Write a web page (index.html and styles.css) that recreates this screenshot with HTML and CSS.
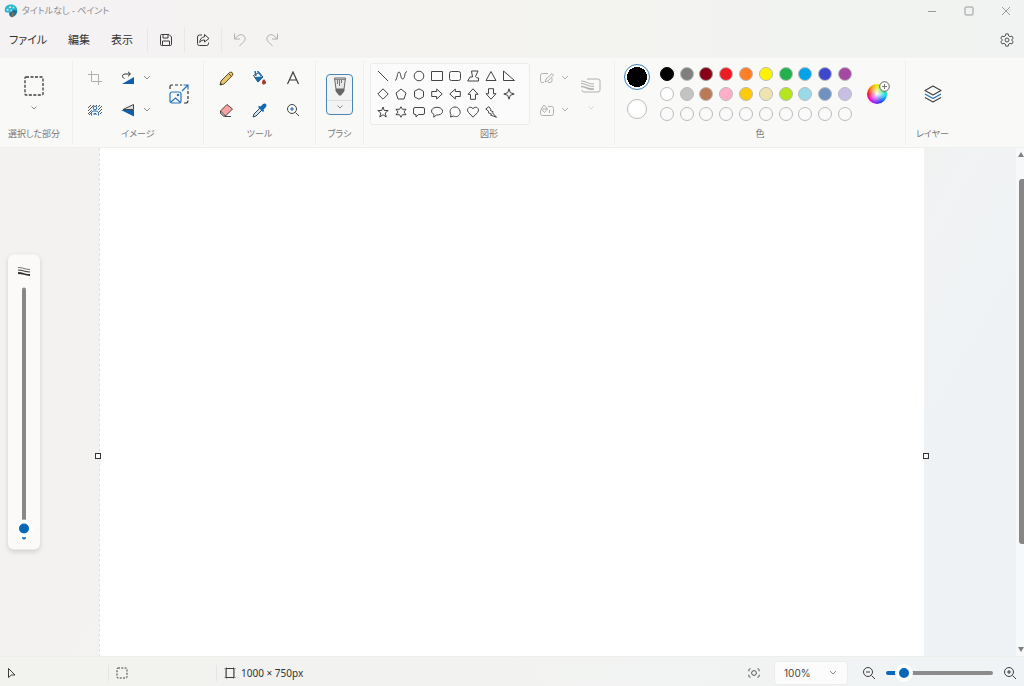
FILE: index.html
```html
<!DOCTYPE html>
<html lang="ja">
<head>
<meta charset="utf-8">
<meta name="viewport" content="width=device-width, initial-scale=1">
<title>タイトルなし - ペイント</title>
<link rel="stylesheet" href="styles.css">
</head>
<body>
<header class="titlebar">
  <svg class="logo" width="14" height="14" viewBox="0 0 14 14" aria-hidden="true">
    <path d="M7 .6C3 .6 .7 3 .7 6.3c0 2 1.5 2.5 3 2.2 1-.2 1.4 .5 1.4 1.3 0 1.5 .8 3 2.6 3 3.400 0 5.600-3 5.600-6.300C13.300 3 10.600 .6 7 .6z" fill="#2fb4cf"/>
    <path d="M9 6l4 .5c0 3-2 6-5.300 6.400C6 12.900 5.300 11 5.300 9.500z" fill="#1d6f96"/>
    <path d="M8 8l2.500 1-1.500 4-2 .3z" fill="#8c6a58"/>
    <circle cx="3.6" cy="5.7" r="1" fill="#d8f6fa"/><circle cx="6" cy="3.3" r="1" fill="#e9fbd8"/><circle cx="9.3" cy="3.6" r="1" fill="#8ae4ee"/><circle cx="7.2" cy="6.4" r="1" fill="#8fe3f0"/>
  </svg>
  <h1 class="title">タイトルなし - ペイント</h1>
  <div class="window-buttons">
    <button aria-label="最小化"><svg width="10" height="10" viewBox="0 0 10 10"><path d="M1 5.5h8"/></svg></button>
    <button aria-label="最大化"><svg width="10" height="10" viewBox="0 0 10 10"><rect x="1" y="1" width="8" height="8" rx="1"/></svg></button>
    <button aria-label="閉じる"><svg width="10" height="10" viewBox="0 0 10 10"><path d="M1 1l8 8M9 1l-8 8"/></svg></button>
  </div>
</header>

<nav class="menubar" aria-label="メニュー">
  <div class="menus">
    <button>ファイル</button>
    <button>編集</button>
    <button>表示</button>
  </div>
  <div class="quick"><button aria-label="保存"><svg class="ic" width="14" height="14" viewBox="0 0 14 14"><path d="M2.500 1.500h7.500l2.500 2.500v7.500a1 1 0 0 1-1 1h-9a1 1 0 0 1-1-1v-9a1 1 0 0 1 1-1zM4 1.500V5h5V1.500M3.500 12.500V8h7v4.500"/></svg></button></div>
  <div class="quick"><button aria-label="共有"><svg class="ic" width="14" height="14" viewBox="0 0 14 14"><path d="M6 2H3.500A2 2 0 0 0 1.500 4v6.500a2 2 0 0 0 2 2h7a2 2 0 0 0 2-2V9.500M8.500 1.500L13 5.500 8.500 9V7C6.500 7 5 7.500 3.700 9.500 4 6 5.500 4.200 8.500 3.800z"/></svg></button></div>
  <div class="quick history">
    <button aria-label="元に戻す" disabled><svg class="ic" width="14" height="14" viewBox="0 0 14 14"><path d="M1.500 .5v5.500h5.500M1.800 5.700L5 2.800c2-1.800 4.500-1.300 6 .2 1.500 1.600 1.500 4 0 5.500L6.500 13"/></svg></button>
    <button aria-label="やり直し" disabled><svg class="ic" width="14" height="14" viewBox="0 0 14 14"><path d="M12.500 .5v5.500h-5.500M12.200 5.700L9 2.800C7 1 4.500 1.500 3 3c-1.500 1.600-1.500 4 0 5.500L7.500 13"/></svg></button>
  </div>
  <button class="settings" aria-label="設定"><svg class="ic" width="14" height="14" viewBox="0 0 16 16"><path d="M6.600 1h2.800l.5 2.300 1.500 .9 2.200-.7 1.400 2.400L13.300 8l1.700 2.100-1.400 2.400-2.200-.7-1.500 .9-.5 2.300H6.600l-.5-2.300-1.500-.9-2.200 .7L1 10.100 2.700 8 1 5.900l1.400-2.400 2.200 .7 1.500-.9z"/><circle cx="8" cy="8" r="2.2"/></svg></button>
</nav>

<main class="ribbon">
  <section class="group g-select">
    <div class="body stack">
      <button class="big" aria-label="選択"><svg class="ic" width="20" height="20" viewBox="0 0 20 20"><rect x="1" y="1" width="18" height="18" rx="1" stroke-width="1.3" stroke-dasharray="3 1.5"/></svg></button>
      <button aria-label="選択オプション"><svg class="chev" width="6" height="4" viewBox="0 0 6 4"><path d="M.5 .5L3 3 5.500 .5"/></svg></button>
    </div>
    <h2>選択した部分</h2>
  </section>

  <section class="group g-image">
    <div class="body">
      <div class="image-tools">
        <button aria-label="トリミング" disabled><svg class="ic" width="14" height="14" viewBox="0 0 14 14"><path d="M3.500 0v10.500H14M0 3.500h10.500V14"/></svg></button>
        <button aria-label="回転"><svg width="14" height="14" viewBox="0 0 14 14"><path d="M13 6v7H1z" fill="#0f5fad"/><path d="M3.500 7.500C.5 6.500 1 3 4 3h5M7 .8L9.500 3 7 5.300" fill="none" stroke="#333"/></svg></button>
        <button aria-label="回転オプション"><svg class="chev" width="8" height="6" viewBox="0 0 8 6"><path d="M1 1l3 3 3-3"/></svg></button>
        <button aria-label="背景の削除"><svg width="14" height="12" viewBox="0 0 14 12" fill="none" stroke="#555"><path d="M0 4L3 1M0 7l6-6M0 10l4-4M1 11l3-3M8 2l1-1M10 3l2-2M10 6l4-4M10 9l4-4M12 10l2-2"/><path d="M3.500 11.500V9.500c0-2 1-2.500 3.500-2.500s3.500 .5 3.500 2.500v2M6 11V9.500h2V11" stroke="#1d69b0"/><circle cx="7" cy="4" r="1.8" stroke="#1d69b0"/></svg></button>
        <button aria-label="反転"><svg width="14" height="14" viewBox="0 0 14 14"><path d="M2 6.500l10.500-5v5z" fill="#ddd" stroke="#444"/><path d="M0 7h13v6.500z" fill="#0f5fad"/></svg></button>
        <button aria-label="反転オプション"><svg class="chev" width="8" height="6" viewBox="0 0 8 6"><path d="M1 1l3 3 3-3"/></svg></button>
      </div>
      <button class="resize" aria-label="サイズ変更"><svg width="20" height="20" viewBox="0 0 20 20" fill="none"><path d="M1 5V2.500Q1 1 2.500 1H4M6 1h3M11 1h2M19 7v3M19 12v3M19 16.500Q19 19 17 19h-2" stroke="#333" stroke-width="1.2"/><g stroke="#2874b5" stroke-width="1.2"><rect x="1" y="8" width="11" height="11" rx="2"/><path d="M2 18l4.500-4 4.500 4M13 7l6-6M14.500 1H19v4.500"/><circle cx="9" cy="11" r=".7"/></g></svg></button>
    </div>
    <h2>イメージ</h2>
  </section>

  <section class="group g-tools">
    <div class="body">
      <div class="tools">
        <button aria-label="鉛筆"><svg width="15" height="15" viewBox="0 0 15 15"><path d="M1 14l1-4 8.500-8.500q1.500-1 2.700 .2t.2 2.700L5 13z" fill="#e9c56c" stroke="#5a4a2c"/><path d="M1 14l.7-2.200 1.500 1.500z" fill="#333"/><path d="M10 3l2.500 2.500" stroke="#5a4a2c"/></svg></button>
        <button aria-label="塗りつぶし"><svg width="15" height="15" viewBox="0 0 15 15"><path d="M1.500 4.500L7 1.500l4 4.500-5 5z" fill="#fff" stroke="#444"/><path d="M2.500 6L10 5.500l1 1-5 5z" fill="#1b6cad"/><path d="M3 0l1 5M5.500 0l4 5" stroke="#1b6cad" stroke-width="1.5"/><path d="M12 8q2.500 3 2 4t-2 1.500-2-1.500 2-4z" fill="#a8392b"/></svg></button>
        <button aria-label="テキスト"><svg class="ic" width="14" height="14" viewBox="0 0 14 14"><path d="M1.500 13L7 1l5.500 12M3.500 9h7" stroke-width="1.2"/></svg></button>
        <button aria-label="消しゴム"><svg width="15" height="15" viewBox="0 0 15 15"><path d="M1.500 8L8 1.500l5.500 4.500L6.500 13H4.500L1.500 10z" fill="#f5a3a4" stroke="#54413f"/><path d="M1.500 8l5 5H4.500l-3-3z" fill="#fff" stroke="#444"/><path d="M6 13.500h6" stroke="#444"/></svg></button>
        <button aria-label="色の選択"><svg width="15" height="15" viewBox="0 0 15 15"><path d="M1 14l1-3 6-6 2 2-6 6z" fill="#c9e5f5" stroke="#345"/><path d="M7 3l1.500 .5L11 1q2-1 3 0t0 3l-2.500 2.500 .5 1.500-1 1-5-5z" fill="#1269b5"/></svg></button>
        <button aria-label="拡大鏡"><svg width="14" height="14" viewBox="0 0 14 14" fill="none"><circle cx="6" cy="6" r="4.5" stroke="#444"/><path d="M9.500 9.500L13 13" stroke="#444"/><path d="M4 6h4M6 4v4" stroke="#176bb4"/></svg></button>
      </div>
    </div>
    <h2>ツール</h2>
  </section>

  <section class="group g-brush">
    <div class="body">
      <div class="brush">
        <button aria-label="ブラシ"><svg width="14" height="20" viewBox="0 0 14 20"><path d="M1.500 1h11l-1.500 11H3z" fill="#e6e6e6" stroke="#666"/><path d="M2 2.500h10" stroke="#888"/><path d="M4.500 3v4M6.500 3v6M8.500 3v3" stroke="#777"/><path d="M2.500 12h9v2L8 18.500H6L2.500 14z" fill="#666"/></svg></button>
        <button aria-label="ブラシの種類"><svg class="chev" width="6" height="4" viewBox="0 0 6 4"><path d="M.5 .5L3 3 5.500 .5"/></svg></button>
      </div>
    </div>
    <h2>ブラシ</h2>
  </section>

  <section class="group g-shapes">
    <div class="body">
      <div class="shapes">
        <button aria-label="直線"><svg viewBox="0 0 12 12"><path d="M1 1l10 10"/></svg></button>
        <button aria-label="曲線"><svg viewBox="0 0 12 12"><path d="M0 10.500C2.500 10 2 2 4 2s1.500 8 4 7S9 2 12 1.500"/></svg></button>
        <button aria-label="楕円形"><svg viewBox="0 0 12 12"><circle cx="6" cy="6" r="4.8"/></svg></button>
        <button aria-label="四角形"><svg viewBox="0 0 12 12"><path d="M.5 1.500h11v9H.5z"/></svg></button>
        <button aria-label="角丸四角形"><svg viewBox="0 0 12 12"><rect x=".5" y="1.5" width="11" height="9" rx="2"/></svg></button>
        <button aria-label="多角形"><svg viewBox="0 0 12 12"><path d="M4.500 1H11L8.500 6.500Q9 8 11.500 8v3H.7L3 7h2.500z"/></svg></button>
        <button aria-label="三角形"><svg viewBox="0 0 12 12"><path d="M6 1.500l5 9H1z"/></svg></button>
        <button aria-label="直角三角形"><svg viewBox="0 0 12 12"><path d="M.5 1v9.500h11z"/></svg></button>
        <button aria-label="ひし形"><svg viewBox="0 0 12 12"><path d="M6 .8L11.200 6 6 11.200 .8 6z"/></svg></button>
        <button aria-label="五角形"><svg viewBox="0 0 12 12"><path d="M6 1l5 4-2 6H3L1 5z"/></svg></button>
        <button aria-label="六角形"><svg viewBox="0 0 12 12"><path d="M6 .8l4.500 2.500v5.500L6 11.200 1.500 8.800V3.300z"/></svg></button>
        <button aria-label="右矢印"><svg viewBox="0 0 12 12"><path d="M.7 3.500h5V1l5.500 5-5.500 5V8.500h-5z"/></svg></button>
        <button aria-label="左矢印"><svg viewBox="0 0 12 12"><path d="M11.300 3.500h-5V1L.8 6l5.500 5V8.500h5z"/></svg></button>
        <button aria-label="上矢印"><svg viewBox="0 0 12 12"><path d="M3.500 11.300v-5H1L6 .8l5 5.500H8.500v5z"/></svg></button>
        <button aria-label="下矢印"><svg viewBox="0 0 12 12"><path d="M3.500 .7v5H1l5 5.500 5-5.500H8.500v-5z"/></svg></button>
        <button aria-label="4点の星"><svg viewBox="0 0 12 12"><path d="M6 .8l1.300 3.900L11.200 6 7.300 7.300 6 11.200 4.700 7.300 .8 6l3.900-1.300z"/></svg></button>
        <button aria-label="5点の星"><svg viewBox="0 0 12 12"><path d="M6 1l1.300 3.500h3.900L8.200 7l1 4L6 8.700 2.800 11l1-4L.8 4.500h3.900z"/></svg></button>
        <button aria-label="6点の星"><svg viewBox="0 0 12 12"><path d="M6 .8l1.500 2.500H11L9 6l2 2.700H7.500L6 11.200 4.500 8.700H1L3 6 1 3.300h3.500z"/></svg></button>
        <button aria-label="角丸吹き出し"><svg viewBox="0 0 12 12"><path d="M2 1.500h8q1.500 0 1.500 1.500v4q0 1.500-1.500 1.500H5.500L3 11V8.500H2Q.5 8.500 .5 7V3Q.5 1.500 2 1.500z"/></svg></button>
        <button aria-label="楕円吹き出し"><svg viewBox="0 0 12 12"><path d="M3 8.500C-1.500 6 .5 1.300 6 1.300s7.500 5 3.500 7C8 9 7 9 5.500 9L2.800 11.200z"/></svg></button>
        <button aria-label="雲形吹き出し"><svg viewBox="0 0 12 12"><path d="M2 8.500C-.3 5 2 1 6 1s6.500 5 4.500 7.500C9 11 6 11 4.500 10L1.500 11z"/></svg></button>
        <button aria-label="ハート"><svg viewBox="0 0 12 12"><path d="M6 11.200L1.500 6.500C-1.500 3 3 -1 6 2.700c3-3.700 7.500 .3 4.500 3.800z"/></svg></button>
        <button aria-label="稲妻"><svg viewBox="0 0 12 12"><path d="M.8 3l3-2.300L6 3.500l-.8 .7L8.300 6l-.9 .8L11.500 11.300 5.500 9l1-.8L3 6.500l1-.8z"/></svg></button>
      </div>
      <div class="shape-options">
        <button aria-label="図形の輪郭" disabled><svg class="ic" width="14" height="12" viewBox="0 0 14 12"><path d="M8 1.500H2.500Q.5 1.500 .5 3.500v5q0 2 2 2H4M12 6v2.500q0 2-2 2H8M5 10l1-3L12 1.500l1.500 1.500L8 9z"/></svg></button>
        <button aria-label="輪郭の種類" disabled><svg class="chev" width="8" height="6" viewBox="0 0 8 6"><path d="M1 1l3 3 3-3"/></svg></button>
        <button aria-label="図形の塗りつぶし" disabled><svg class="ic" width="14" height="12" viewBox="0 0 14 12"><path d="M8 2.500h3.500q2 0 2 2v5q0 2-2 2h-9q-2 0-2-2V6M1 5l3-4 3.500 4-3 3.500zM2 5h5.500M9.500 6v3"/></svg></button>
        <button aria-label="塗りつぶしの種類" disabled><svg class="chev" width="8" height="6" viewBox="0 0 8 6"><path d="M1 1l3 3 3-3"/></svg></button>
      </div>
      <div class="stack thickness">
        <button class="big" aria-label="サイズ" disabled><svg class="ic" width="20" height="16" viewBox="0 0 20 16"><path d="M6 1h11q2 0 2 2v9q0 2-2 2H3q-2 0-2-2M0 3q3 0 6 1.500T13 6M0 5.500q3 0 6 1.500T13 8.500" /><path d="M0 8.500q3 0 6 1.500T13 11" stroke-width="1.6"/></svg></button>
        <button aria-label="サイズの種類" disabled><svg class="chev faint" width="6" height="4" viewBox="0 0 6 4"><path d="M.5 .5L3 3 5.500 .5"/></svg></button>
      </div>
    </div>
    <h2>図形</h2>
  </section>

  <section class="group g-colors">
    <div class="body">
      <div class="current">
        <button class="primary" aria-label="色 1"></button>
        <button class="secondary" aria-label="色 2"></button>
      </div>
      <div class="palette">
        <button class="black" aria-label="黒"></button><button class="gray" aria-label="灰色"></button><button class="maroon" aria-label="暗い赤"></button><button class="red" aria-label="赤"></button><button class="orange" aria-label="オレンジ"></button><button class="yellow" aria-label="黄"></button><button class="green" aria-label="緑"></button><button class="azure" aria-label="青緑"></button><button class="indigo" aria-label="藍色"></button><button class="purple" aria-label="紫"></button>
        <button class="white" aria-label="白"></button><button class="silver" aria-label="薄い灰色"></button><button class="brown" aria-label="茶"></button><button class="pink" aria-label="ローズ"></button><button class="gold" aria-label="金"></button><button class="cream" aria-label="薄い黄"></button><button class="lime" aria-label="ライム"></button><button class="sky" aria-label="薄い青緑"></button><button class="slate" aria-label="青灰色"></button><button class="lavender" aria-label="ラベンダー"></button>
        <button aria-label="空き 1"></button><button aria-label="空き 2"></button><button aria-label="空き 3"></button><button aria-label="空き 4"></button><button aria-label="空き 5"></button><button aria-label="空き 6"></button><button aria-label="空き 7"></button><button aria-label="空き 8"></button><button aria-label="空き 9"></button><button aria-label="空き 10"></button>
      </div>
      <button class="wheel" aria-label="色の編集"><span class="disc"><svg class="plus" width="11" height="11" viewBox="0 0 11 11"><circle cx="5.5" cy="5.5" r="4.8" fill="#f8f8f8" stroke="#666"/><path d="M3 5.500h5M5.500 3v5" stroke="#777"/></svg></span></button>
    </div>
    <h2>色</h2>
  </section>

  <section class="group g-layers">
    <div class="body">
      <button aria-label="レイヤー"><svg width="18" height="18" viewBox="0 0 18 18" fill="none" stroke-width="1.2" stroke-linejoin="round"><path d="M9 1l8 4.500L9 10 1 5.500zM1 12.500L9 17l8-4.500" stroke="#444"/><path d="M1 9l8 4.500L17 9" stroke="#1d6fb8"/></svg></button>
    </div>
    <h2>レイヤー</h2>
  </section>
</main>

<section class="workspace" aria-label="キャンバス">
  <div class="stage">
    <div class="canvas"><i class="handle left"></i><i class="handle right"></i></div>
  </div>
  <div class="scrollbar" aria-hidden="true"><i class="up"></i><i class="thumb"></i><i class="down"></i></div>
  <label class="size-panel">
    <svg width="14" height="12" viewBox="0 0 14 12" fill="none" stroke="#333"><path d="M1 2q3 0 6 1t6 1" stroke="#777"/><path d="M1 4.500q3 0 6 1t6 1"/><path d="M1 7.500q3 0 6 1t6 1" stroke-width="1.8"/></svg>
    <input class="size-slider" type="range" min="0" max="100" value="1" aria-label="ブラシのサイズ">
  </label>
</section>

<footer class="statusbar">
  <div class="cell"><svg class="ic" width="10" height="12" viewBox="0 0 10 12"><path d="M1.500 1.500v9L4.300 8H8z"/></svg></div>
  <div class="cell"><svg class="ic" width="12" height="12" viewBox="0 0 12 12"><rect x="1" y="1" width="10" height="10" rx="1" stroke-dasharray="2 1.3"/></svg></div>
  <div class="cell size"><svg class="ic" width="12" height="12" viewBox="0 0 12 12"><path d="M2.500 0v12M9.500 0v12M0 1.500h12M0 10.500h12" stroke-width=".4"/><path d="M2 1.500h8v9H2z"/></svg><span>1000 × 750px</span></div>
  <div class="zoom">
    <button aria-label="ウィンドウに合わせる"><svg class="ic" width="12" height="12" viewBox="0 0 14 12"><path d="M1 4V2.500Q1 1 3 1M11 1q2 0 2 1.500V4M1 8v1.500Q1 11 3 11M11 11q2 0 2-1.500V8"/><circle cx="7" cy="6" r="2.8"/></svg></button>
    <div class="select">
      <select aria-label="ズーム"><option>100%</option></select>
      <svg class="chev" width="8" height="6" viewBox="0 0 8 6"><path d="M1 1l3 3 3-3"/></svg>
    </div>
    <button aria-label="縮小"><svg class="ic" width="14" height="14" viewBox="0 0 14 14"><circle cx="6" cy="6" r="4.5"/><path d="M9.500 9.500L13 13M4 6h4"/></svg></button>
    <input class="zoom-slider" type="range" min="0" max="100" value="10" aria-label="ズーム倍率">
    <button aria-label="拡大"><svg class="ic" width="14" height="14" viewBox="0 0 14 14"><circle cx="6" cy="6" r="4.5"/><path d="M9.500 9.500L13 13M4 6h4M6 4v4"/></svg></button>
  </div>
</footer>
</body>
</html>
```
FILE: styles.css
```css
* { box-sizing: border-box; }

body {
  margin: 0;
  height: 100vh;
  display: flex;
  flex-direction: column;
  overflow: hidden;
  background: linear-gradient(90deg, #f4f2f3, #f4f3f0 45%, #f0f3f1);
  color: #333;
  font: 11px/16px "Noto Sans", "Noto Sans CJK JP", sans-serif;
  font-feature-settings: "palt";
}

button {
  display: flex;
  align-items: center;
  justify-content: center;
  padding: 0;
  border: 0;
  background: none;
  color: inherit;
  font: inherit;
}

svg { flex: none; }
.ic { fill: none; stroke: #3d3d3d; }
.chev { fill: none; stroke: #8a8a8a; }
button:disabled .ic, button:disabled .chev { stroke: #b0b0b0; }
button:disabled .faint { stroke: #d4d4d4; }

/* Title bar */
.titlebar { display: flex; align-items: center; height: 22px; padding-left: 4px; flex: none; }
.title { margin: 0 auto 0 4px; font-size: 9px; font-weight: 400; color: #8c8a8c; }
.window-buttons { display: flex; }
.window-buttons button { width: 37px; height: 22px; }
.window-buttons svg { fill: none; stroke: #999; }

/* Menu bar */
.menubar { display: flex; align-items: center; height: 36px; flex: none; padding: 0 10px 0 9px; }
.menus { display: flex; gap: 21px; margin-right: 14px; }
.quick { display: flex; align-items: center; justify-content: center; height: 24px; width: 37px; border-left: 1px solid #e8e6e7; }
.quick button { width: 32px; height: 24px; }
.quick.history { width: 68px; }
.settings { margin-left: auto; }

/* Ribbon */
.ribbon {
  display: flex;
  flex: none;
  padding: 2px 0;
  background: #f9f9f8;
  border-top: 1px solid #fbfbfb;
  border-bottom: 1px solid #eeeeec;
}
.group { flex: none; padding: 1px 0 3px; border-right: 1px solid #efefed; }
.group h2 { margin: 0; font-size: 9px; line-height: 16px; font-weight: 400; color: #777; text-align: center; white-space: nowrap; }
.body { display: flex; align-items: center; justify-content: center; height: 64px; }
.stack { display: flex; flex-direction: column; gap: 4px; }
.big { height: 24px; }
.stack button:last-child { height: 12px; }

.g-select { width: 73px; padding-right: 4px; }
.g-image { width: 131px; }
.image-tools { display: grid; grid-template: 32px 32px / 36px 30px 8px; margin-left: 4px; }
.resize { flex: 1; padding-left: 4px; height: 32px; }
.g-tools { width: 112px; }
.tools { display: grid; grid-template: 32px 32px / repeat(3, 33px); }
.g-brush { width: 48px; }
.brush { width: 27px; border: 1px solid #4a86b8; border-radius: 4px; background: #f3f3f3; overflow: hidden; }
.brush button { width: 100%; height: 25px; }
.brush button + button { height: 14px; border-top: 1px solid #dcdcdc; }

.g-shapes { width: 251px; }
.g-shapes .body { justify-content: flex-start; padding-left: 6px; }
.shapes {
  display: grid;
  grid-template: repeat(3, 18px) / repeat(8, 18px);
  padding: 3px 11px 3px 3px;
  border: 1px solid #ebebea;
  border-radius: 3px;
  background: #fbfbfb;
}
.shapes svg { width: 12px; height: 12px; fill: none; stroke: #444; }
.shape-options { display: grid; grid-template: 32px 32px / 20px 16px; margin-left: 7px; }
.thickness { width: 36px; }

.g-colors { width: 291px; }
.g-colors .body { justify-content: flex-start; padding-left: 9px; }
.current { display: flex; flex-direction: column; align-items: center; gap: 9px; width: 26px; height: 60px; margin-right: 7px; }
.primary { width: 26px; height: 26px; border-radius: 50%; border: 1px solid #3c7ebb; background: radial-gradient(circle, #000 10px, #fff 10px); }
.secondary { width: 20px; height: 20px; border-radius: 50%; border: 1px solid #bbb; background: #fff; }
.palette { display: grid; grid-template: repeat(3, 20px) / repeat(10, 1fr); width: 198px; place-items: center; }
.palette button { width: 14px; height: 14px; border-radius: 50%; border: 1px solid #bbb; background: #fafafa; }
.palette .black { background: #000; border-color: #000; }
.palette .gray { background: #7f7f7f; }
.palette .maroon { background: #880015; border-color: #999; }
.palette .red { background: #ed1c24; }
.palette .orange { background: #ff7f27; }
.palette .yellow { background: #fff200; }
.palette .green { background: #22b14c; }
.palette .azure { background: #00a2e8; }
.palette .indigo { background: #3f48cc; }
.palette .purple { background: #a349a4; }
.palette .white { background: #fff; }
.palette .silver { background: #c3c3c3; }
.palette .brown { background: #b97a57; }
.palette .pink { background: #ffaec9; }
.palette .gold { background: #ffc90e; }
.palette .cream { background: #efe4b0; }
.palette .lime { background: #b5e61d; }
.palette .sky { background: #99d9ea; }
.palette .slate { background: #7092be; }
.palette .lavender { background: #c8bfe7; }
.wheel { width: 44px; height: 32px; }
.disc {
  position: relative;
  width: 20px;
  height: 20px;
  border-radius: 50%;
  background:
    radial-gradient(circle, #fff, rgba(255, 255, 255, 0) 9px),
    conic-gradient(#e8f000, #30e060 60deg, #00d8f0 100deg, #1040f0 150deg, #8020f0 190deg, #f000e0 230deg, #f01030 270deg, #ff9000 320deg, #e8f000);
}
.plus { position: absolute; top: -3px; right: -3px; }

.g-layers { width: 53px; border-right: 0; }

/* Workspace */
.workspace {
  position: relative;
  display: flex;
  flex: 1;
  min-height: 0;
  background: linear-gradient(120deg, #f4f2f1 20%, #f2f3f1 60%, #eff2f5 85%);
}
.stage { flex: 1; padding: 0 92px 0 99px; overflow: hidden; }
.canvas { position: relative; aspect-ratio: 4 / 3; background: #fff; border-left: 1px dashed #e0e3db; }
.handle { position: absolute; top: 50%; width: 6px; height: 6px; margin-top: -4px; border: 1px solid #333; background: #fff; }
.handle.left { right: 100%; margin-right: -1px; }
.handle.right { left: 100%; margin-left: -1px; }
.scrollbar { display: flex; flex-direction: column; align-items: flex-end; width: 8px; padding: 4px 0; background: #f7f8f9; }
.up, .down { border: 3px solid transparent; }
.up { border-top: 0; border-bottom: 5px solid #808080; }
.down { border-bottom: 0; border-top: 5px solid #808080; margin-top: auto; }
.thumb { width: 5px; height: 73%; margin-top: 22px; border-radius: 3px 0 0 3px; background: #868686; }

.size-panel {
  position: absolute;
  left: 8px;
  top: 50%;
  transform: translateY(-50%);
  display: flex;
  flex-direction: column;
  align-items: center;
  gap: 10px;
  width: 32px;
  padding: 11px 0 10px;
  border-radius: 6px;
  background: #fcfaf9;
  box-shadow: 0 2px 5px rgba(0, 0, 0, .14);
}

input[type="range"] { appearance: none; margin: 0; background: none; }
input[type="range"]::-webkit-slider-thumb {
  appearance: none;
  width: 18px;
  height: 18px;
  border: 4px solid #fff;
  border-radius: 50%;
  background: #0867b8;
}
.size-slider {
  writing-mode: vertical-lr;
  direction: rtl;
  width: 18px;
  height: 252px;
}
.size-slider::-webkit-slider-runnable-track {
  width: 4px;
  height: 100%;
  border-radius: 2px;
  background: linear-gradient(#8b8787 94%, #0867b8 94%);
}
.size-slider::-webkit-slider-thumb { margin-left: -7px; }

/* Status bar */
.statusbar {
  display: flex;
  align-items: center;
  flex: none;
  height: 30px;
  padding: 2px 7px 0 0;
  border-top: 1px solid #eeeeeb;
  background: linear-gradient(90deg, #f2f2ef, #f2f3f1 50%, #f0f3f5);
}
.cell { display: flex; align-items: center; width: 108px; height: 16px; padding-left: 7px; }
.cell + .cell { border-left: 1px solid #e5e5e3; }
.cell.size { gap: 5px; font-size: 10px; width: auto; white-space: nowrap; }
.zoom { display: flex; align-items: center; margin-left: auto; }
.select { position: relative; margin: 0 14px; }
.select select {
  appearance: none;
  width: 74px;
  height: 24px;
  padding: 0 9px;
  border: 1px solid #ececec;
  border-radius: 4px;
  background: #fcfcfc;
  color: #444;
  font: 10px/16px Inter, sans-serif;
}
.select .chev { position: absolute; right: 11px; top: 9px; pointer-events: none; }
.zoom-slider { width: 107px; height: 18px; }
.zoom .zoom-slider { margin: 0 10px; }
.zoom-slider::-webkit-slider-runnable-track { height: 4px; border-radius: 2px; background: linear-gradient(90deg, #0867b8 16%, #8b8b8b 16%); }
.zoom-slider::-webkit-slider-thumb { margin-top: -7px; }
```
